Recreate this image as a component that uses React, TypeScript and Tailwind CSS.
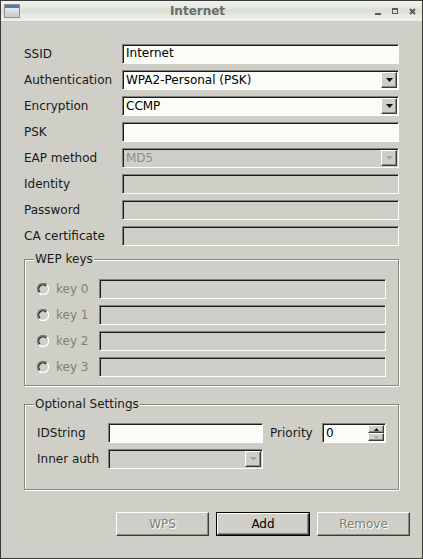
import React from "react";

const font = "font-['DejaVu_Sans',_'Liberation_Sans',_sans-serif]";
const sunken =
  "border border-t-[#808080] border-l-[#808080] border-b-white border-r-white shadow-[inset_1px_1px_0_#1c1c1c]";
const raised =
  "border border-t-white border-l-white border-b-[#3c3c3c] border-r-[#3c3c3c] shadow-[inset_-1px_-1px_0_#8a8a84]";

const Label = ({ text, disabled }: { text: string; disabled?: boolean }) => (
  <span className={`text-[12px] leading-[20px] whitespace-nowrap ${disabled ? "text-[#7b8373]" : "text-[#1a1a1a]"}`}>
    {text}
  </span>
);

const TextBox = ({ value, disabled, className = "" }: { value?: string; disabled?: boolean; className?: string }) => (
  <div
    className={`h-[20px] ${sunken} ${disabled ? "bg-[#d0cfc7]" : "bg-[#fbfcf8]"} pl-[3px] text-[12px] leading-[17px] text-black ${className}`}
  >
    {value}
  </div>
);

const Arrow = ({ up, disabled, small }: { up?: boolean; disabled?: boolean; small?: boolean }) => (
  <svg width={small ? 5 : 7} height={small ? 3 : 4} viewBox={small ? "0 0 5 3" : "0 0 7 4"}>
    <polygon
      points={small ? (up ? "2.5,0 5,3 0,3" : "0,0 5,0 2.5,3") : up ? "3.5,0 7,4 0,4" : "0,0 7,0 3.5,4"}
      fill={disabled ? "#a3a8a0" : "#111"}
    />
  </svg>
);

const Combo = ({ value, disabled, className = "" }: { value?: string; disabled?: boolean; className?: string }) => (
  <div
    className={`h-[20px] ${sunken} ${disabled ? "bg-[#d0cfc7]" : "bg-[#fbfcf8]"} flex items-center pl-[3px] pr-[1px] ${className}`}
  >
    <span className={`flex-1 text-[12px] leading-[17px] ${disabled ? "text-[#8b9085]" : "text-black"}`}>{value}</span>
    <div className={`w-[16px] h-[16px] bg-[#d0cfc7] ${raised} flex items-center justify-center`}>
      <Arrow disabled={disabled} />
    </div>
  </div>
);

const Radio = () => (
  <svg width="12" height="12" viewBox="0 0 12 12">
    <circle cx="6" cy="6" r="5" fill="#d0cfc7" />
    <path d="M 10 2 A 5.5 5.5 0 0 0 2 10" stroke="#7a7a76" strokeWidth="1.2" fill="none" />
    <path d="M 9 3 A 4.2 4.2 0 0 0 3 9" stroke="#1c1c1c" strokeWidth="1.2" fill="none" />
    <path d="M 10 2 A 5.5 5.5 0 0 1 2 10" stroke="#ffffff" strokeWidth="1.2" fill="none" />
  </svg>
);

const Group = ({ title, children, className = "" }: { title: string; children: React.ReactNode; className?: string }) => (
  <div
    className={`relative border border-[#85857e] shadow-[inset_1px_1px_0_#ffffff,1px_1px_0_#ffffff] ${className}`}
  >
    <span className="absolute left-[9px] top-[-9px] px-[1px] bg-[#d0cfc7] text-[12px] leading-[16px] text-[#1a1a1a]">
      {title}
    </span>
    {children}
  </div>
);

const Button = ({ text, disabled, isDefault }: { text: string; disabled?: boolean; isDefault?: boolean }) => {
  const inner = (
    <div
      className={`h-full ${raised} bg-[#d0cfc7] flex items-center justify-center text-[12px] ${
        disabled ? "text-[#7b8373] [text-shadow:1px_1px_0_#ffffff]" : "text-black"
      }`}
    >
      {text}
    </div>
  );
  return isDefault ? (
    <div className="w-[94px] h-[24px] border border-black">{inner}</div>
  ) : (
    <div className="w-[93px] h-[24px]">{inner}</div>
  );
};

const fields: { label: string; kind: "text" | "combo"; value?: string; disabled?: boolean }[] = [
  { label: "SSID", kind: "text", value: "Internet" },
  { label: "Authentication", kind: "combo", value: "WPA2-Personal (PSK)" },
  { label: "Encryption", kind: "combo", value: "CCMP" },
  { label: "PSK", kind: "text" },
  { label: "EAP method", kind: "combo", value: "MD5", disabled: true },
  { label: "Identity", kind: "text", disabled: true },
  { label: "Password", kind: "text", disabled: true },
  { label: "CA certificate", kind: "text", disabled: true },
];

export default function App() {
  return (
    <div className={`w-[423px] h-[559px] border border-[#3a3a3a] bg-[#d0cfc7] flex flex-col ${font}`}>
      {/* title bar */}
      <div className="h-[21px] flex items-center border-b border-[#c4cdb8] bg-[linear-gradient(to_bottom,#f0f2ec_0%,#e6eae1_30%,#d8dfd1_50%,#e6eae1_70%,#eef1ea_100%)]">
        <div className="ml-[3px] w-[16px] h-[14px] border border-[#8c9097] bg-[linear-gradient(to_bottom,#f2f2f2,#c9c9c9)] shadow-[inset_0_3px_0_#4a79bd]" />
        <div className="flex-1 text-center text-[12px] font-bold text-[#6b6b6b] leading-[20px]">Internet</div>
        <div className="flex items-center gap-[11px] mr-[6px]">
          <div className="w-[6px] h-[2px] mt-[5px] bg-[#5a5a5a]" />
          <div className="w-[6px] h-[6px] border border-t-2 border-[#5a5a5a]" />
          <svg width="7" height="7" viewBox="0 0 7 7">
            <path d="M1 1 L6 6 M6 1 L1 6" stroke="#5a5a5a" strokeWidth="1.8" />
          </svg>
        </div>
      </div>

      {/* body */}
      <div className="flex-1 flex flex-col pt-[22px] px-[23px] pb-[22px]">
        <div className="grid grid-cols-[98px_1fr] gap-y-[6px] items-center">
          {fields.map((f) => (
            <React.Fragment key={f.label}>
              <Label text={f.label} />
              {f.kind === "text" ? (
                <TextBox value={f.value} disabled={f.disabled} />
              ) : (
                <Combo value={f.value} disabled={f.disabled} />
              )}
            </React.Fragment>
          ))}
        </div>

        <Group title="WEP keys" className="mt-[13px] pt-[19px] pb-[8px] pl-[12px] pr-[12px]">
          <div className="grid grid-cols-[62px_1fr] gap-y-[6px] items-center">
            {[0, 1, 2, 3].map((k) => (
              <React.Fragment key={k}>
                <div className="flex items-center gap-[7px]">
                  <Radio />
                  <Label text={`key ${k}`} disabled />
                </div>
                <TextBox disabled />
              </React.Fragment>
            ))}
          </div>
        </Group>

        <Group title="Optional Settings" className="mt-[18px] pt-[18px] pb-[20px] pl-[12px] pr-[12px]">
          <div className="grid grid-cols-[71px_155px_auto_64px] gap-y-[6px] items-center">
            <Label text="IDString" />
            <TextBox />
            <span className="pl-[7px] text-[12px] text-[#1a1a1a]">Priority</span>
            <div className={`h-[20px] ${sunken} bg-[#fbfcf8] flex items-center pl-[3px] pr-[1px]`}>
              <span className="flex-1 text-[12px] leading-[17px] text-black">0</span>
              <div className="flex flex-col">
                <div className={`w-[16px] h-[8px] bg-[#d0cfc7] ${raised} flex items-center justify-center`}>
                  <Arrow up small />
                </div>
                <div className={`w-[16px] h-[8px] bg-[#d0cfc7] ${raised} flex items-center justify-center`}>
                  <Arrow small disabled />
                </div>
              </div>
            </div>
            <Label text="Inner auth" />
            <Combo disabled />
          </div>
        </Group>

        <div className="mt-auto flex justify-end gap-[7px] -mr-[11px]">
          <Button text="WPS" disabled />
          <Button text="Add" isDefault />
          <Button text="Remove" disabled />
        </div>
      </div>
    </div>
  );
}
